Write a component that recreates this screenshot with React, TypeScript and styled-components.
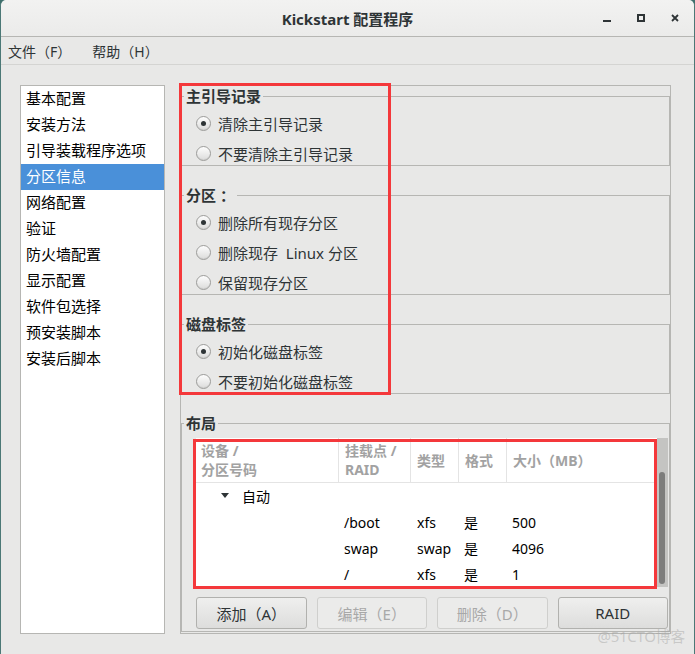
import * as React from 'react'
import styled, { createGlobalStyle, css } from 'styled-components'

const GlobalStyle = createGlobalStyle`
  html, body {
    margin: 0;
    padding: 0;
    background: #3e6f6c;
  }
`

const Window = styled.div`
  position: relative;
  width: 695px;
  height: 654px;
  box-sizing: border-box;
  display: flex;
  flex-direction: column;
  background: #e8e8e7;
  border-left: 1px solid #4b7876;
  border-right: 1px solid #4b7876;
  border-radius: 6px 6px 0 0;
  overflow: hidden;
  color: #2e3436;
  font-family: "Noto Sans", "Noto Sans CJK SC", sans-serif;
`

const TitleBar = styled.div`
  flex: none;
  height: 37px;
  box-sizing: border-box;
  display: grid;
  grid-template-columns: 1fr auto 1fr;
  align-items: center;
  background: linear-gradient(#f2f2f1, #ebebea);
  border-bottom: 1px solid #b6b6b3;
`

const Title = styled.div`
  grid-column: 2;
  font-size: 15px;
  font-weight: bold;
  color: #2e3436;
`

const Controls = styled.div`
  grid-column: 3;
  justify-self: end;
  display: flex;
  padding-right: 2px;
`

const ControlButton = styled.span`
  width: 34px;
  height: 36px;
  display: flex;
  align-items: center;
  justify-content: center;
`

const MenuBar = styled.div`
  flex: none;
  height: 28px;
  box-sizing: border-box;
  display: flex;
  align-items: center;
  gap: 21px;
  padding-left: 7px;
  border-bottom: 1px solid #d4d4d2;
  font-size: 14px;
`

const Main = styled.div`
  flex: 1;
  min-height: 0;
  display: flex;
  gap: 15px;
  padding: 20px 23px 20px 19px;
`

const NavList = styled.ul`
  flex: none;
  width: 145px;
  box-sizing: border-box;
  margin: 0;
  padding: 0;
  list-style: none;
  background: #fff;
  border: 1px solid #b6b6b3;
  font-size: 15px;
`

const NavItem = styled.li<{ $active?: boolean }>`
  height: 26px;
  line-height: 25px;
  padding-left: 5px;
  color: #000;
  ${({ $active }) => $active && css`
    background: #4a90d9;
    color: #fff;
  `}
`

const Panel = styled.div`
  flex: 1;
  min-width: 0;
  border: 1px solid #b6b6b3;
  display: flex;
  flex-direction: column;
  gap: 19px;
`

const Frame = styled.fieldset`
  margin: 0;
  padding: 0;
  min-width: 0;
  border: 1px solid #b6b6b3;
`

const FrameLegend = styled.legend`
  margin-left: 2px;
  padding: 0 2px;
  font-size: 15px;
  font-weight: bold;
  line-height: 20px;
`

const FrameBody = styled.div<{ $top?: number }>`
  display: flex;
  flex-direction: column;
  gap: 10px;
  padding: ${({ $top = 7 }) => $top}px 1px 2px 14px;
`

const RadioRow = styled.label`
  display: flex;
  align-items: center;
  gap: 7px;
  height: 20px;
  font-size: 15px;
`

const RadioDot = styled.span<{ $checked?: boolean }>`
  width: 15px;
  height: 15px;
  box-sizing: border-box;
  border-radius: 50%;
  border: 1px solid #9c9c9a;
  background: linear-gradient(#fdfdfd, #dcdcdb);
  box-shadow: inset 0 -1px 0 rgba(0, 0, 0, 0.05);
  display: flex;
  align-items: center;
  justify-content: center;
  ${({ $checked }) => $checked && css`
    &::after {
      content: '';
      width: 5px;
      height: 5px;
      border-radius: 50%;
      background: #2e3436;
    }
  `}
`

const TreeBox = styled.div`
  height: 149px;
  display: flex;
  background: #fff;
`

const TreeGrid = styled.div`
  flex: 1;
  min-width: 0;
  overflow: hidden;
`

const columns = '143px 72px 48px 48px 1fr'

const TreeHeader = styled.div`
  display: grid;
  grid-template-columns: ${columns};
  height: 45px;
  box-sizing: border-box;
  border-bottom: 1px solid #e4e4e4;
`

const HeaderCell = styled.div<{ $pad?: number }>`
  display: flex;
  flex-direction: column;
  justify-content: center;
  padding-left: ${({ $pad = 6 }) => $pad}px;
  border-right: 1px solid #e4e4e4;
  color: #a2a2a2;
  font-size: 14px;
  font-weight: bold;
  line-height: 19px;
  white-space: nowrap;
  &:last-child {
    border-right: none;
  }
`

const TreeRow = styled.div`
  display: grid;
  grid-template-columns: ${columns};
  height: 26px;
  align-items: center;
  font-size: 14px;
  color: #000;
`

const Cell = styled.div<{ $pad?: number }>`
  display: flex;
  align-items: center;
  padding-left: ${({ $pad = 5 }) => $pad}px;
  white-space: nowrap;
`

const Expander = styled.svg`
  margin-right: 13px;
`

const Scrollbar = styled.div`
  flex: none;
  width: 11px;
  box-sizing: border-box;
  padding: 34px 3px 3px 2px;
  background: #c4c4c2;
`

const Thumb = styled.div`
  height: 100%;
  border-radius: 3px;
  background: #7d7d7c;
`

const ButtonRow = styled.div`
  display: grid;
  grid-template-columns: repeat(4, 1fr);
  gap: 10px;
`

const Button = styled.button`
  height: 32px;
  border-radius: 3px;
  border: 1px solid #b1b1ae;
  background: linear-gradient(#efefee, #dddddc);
  font-family: inherit;
  font-size: 15px;
  color: #2e3436;
  padding: 0;
  &:disabled {
    color: #a8a8a8;
    border-color: #cfcfcd;
    background: #ebebea;
  }
`

const Annotation = styled.div<{ $x: number; $y: number; $w: number; $h: number }>`
  position: absolute;
  box-sizing: border-box;
  border: 3px solid #f4383b;
  pointer-events: none;
  ${({ $x, $y, $w, $h }) => css`
    left: ${$x}px;
    top: ${$y}px;
    width: ${$w}px;
    height: ${$h}px;
  `}
`

const Watermark = styled.div`
  position: absolute;
  right: 9px;
  bottom: 8px;
  font-size: 15px;
  color: rgba(160, 160, 160, 0.45);
  letter-spacing: -0.3px;
`

const navItems = ['基本配置', '安装方法', '引导装载程序选项', '分区信息', '网络配置', '验证', '防火墙配置', '显示配置', '软件包选择', '预安装脚本', '安装后脚本']

const partitions = [
  { mount: '/boot', type: 'xfs', format: '是', size: '500' },
  { mount: 'swap', type: 'swap', format: '是', size: '4096' },
  { mount: '/', type: 'xfs', format: '是', size: '1' },
]

const Radio = ({ checked, children }: { checked?: boolean; children: React.ReactNode }) => (
  <RadioRow>
    <RadioDot $checked={checked} />
    {children}
  </RadioRow>
)

export default function App() {
  return <Window>
    <GlobalStyle />
    <TitleBar>
      <Title>Kickstart 配置程序</Title>
      <Controls>
        <ControlButton>
          <svg width="8" height="10" viewBox="0 0 8 10"><rect x="0" y="7" width="8" height="2" fill="#2e3436" /></svg>
        </ControlButton>
        <ControlButton>
          <svg width="8" height="8" viewBox="0 0 8 8"><rect x="1" y="1" width="6" height="6" fill="none" stroke="#2e3436" strokeWidth="2" /></svg>
        </ControlButton>
        <ControlButton>
          <svg width="8" height="8" viewBox="0 0 8 8"><path d="M1 1 L7 7 M7 1 L1 7" stroke="#2e3436" strokeWidth="1.8" /></svg>
        </ControlButton>
      </Controls>
    </TitleBar>
    <MenuBar>
      <span>文件（F）</span>
      <span>帮助（H）</span>
    </MenuBar>
    <Main>
      <NavList>
        {navItems.map(item => <NavItem key={item} $active={item === '分区信息'}>{item}</NavItem>)}
      </NavList>
      <Panel>
        <Frame>
          <FrameLegend>主引导记录</FrameLegend>
          <FrameBody>
            <Radio checked>清除主引导记录</Radio>
            <Radio>不要清除主引导记录</Radio>
          </FrameBody>
        </Frame>
        <Frame>
          <FrameLegend>分区 ：</FrameLegend>
          <FrameBody>
            <Radio checked>删除所有现存分区</Radio>
            <Radio>删除现存&nbsp; Linux 分区</Radio>
            <Radio>保留现存分区</Radio>
          </FrameBody>
        </Frame>
        <Frame>
          <FrameLegend>磁盘标签</FrameLegend>
          <FrameBody>
            <Radio checked>初始化磁盘标签</Radio>
            <Radio>不要初始化磁盘标签</Radio>
          </FrameBody>
        </Frame>
        <Frame>
          <FrameLegend>布局</FrameLegend>
          <FrameBody $top={5}>
            <TreeBox>
              <TreeGrid>
                <TreeHeader>
                  <HeaderCell $pad={5}><span>设备 /</span><span>分区号码</span></HeaderCell>
                  <HeaderCell><span>挂载点 /</span><span>RAID</span></HeaderCell>
                  <HeaderCell>类型</HeaderCell>
                  <HeaderCell>格式</HeaderCell>
                  <HeaderCell>大小（MB）</HeaderCell>
                </TreeHeader>
                <TreeRow>
                  <Cell $pad={25}>
                    <Expander width="8" height="6" viewBox="0 0 8 6"><path d="M0 0 H8 L4 5 Z" fill="#2e3436" /></Expander>
                    自动
                  </Cell>
                </TreeRow>
                {partitions.map(p => <TreeRow key={p.mount + p.size}>
                  <Cell />
                  <Cell>{p.mount}</Cell>
                  <Cell $pad={6}>{p.type}</Cell>
                  <Cell>{p.format}</Cell>
                  <Cell>{p.size}</Cell>
                </TreeRow>)}
              </TreeGrid>
              <Scrollbar><Thumb /></Scrollbar>
            </TreeBox>
            <ButtonRow>
              <Button>添加（A）</Button>
              <Button disabled>编辑（E）</Button>
              <Button disabled>删除（D）</Button>
              <Button>RAID</Button>
            </ButtonRow>
          </FrameBody>
        </Frame>
      </Panel>
    </Main>
    <Annotation $x={178} $y={83} $w={212} $h={312} />
    <Annotation $x={192} $y={439} $w={464} $h={150} />
    <Watermark>@51CTO博客</Watermark>
  </Window>
}
